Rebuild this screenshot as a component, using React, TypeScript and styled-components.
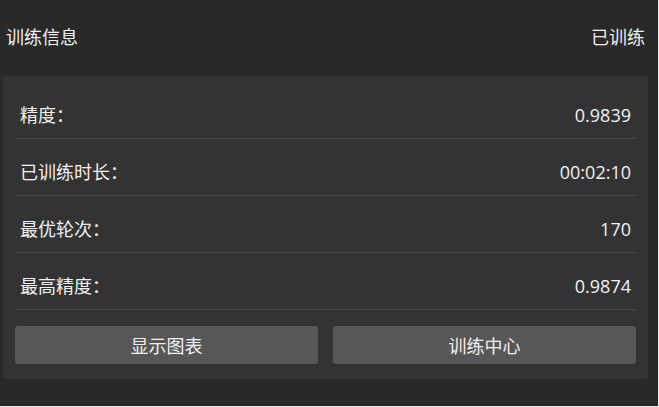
import React from 'react';
import styled, { createGlobalStyle } from 'styled-components';

const GlobalStyle = createGlobalStyle`
  html, body {
    margin: 0;
    padding: 0;
    background: #ececec;
  }
  * {
    box-sizing: border-box;
  }
`;

const Panel = styled.div`
  width: 658px;
  height: 406px;
  background: #292929;
  color: #f0f0f0;
  font-family: "Open Sans", "Noto Sans CJK SC", sans-serif;
  font-size: 18px;
  display: flex;
  flex-direction: column;
`;

const Header = styled.div`
  height: 76px;
  display: flex;
  align-items: center;
  justify-content: space-between;
  padding: 0 13px 2px 6px;
`;

const Title = styled.span`
  line-height: 24px;
`;

const Status = styled.span`
  line-height: 24px;
`;

const Card = styled.div`
  margin: 0 10px 0 3px;
  background: #333333;
  border-radius: 3px;
  padding: 6px 12px 15px;
`;

const Row = styled.div`
  display: flex;
  align-items: center;
  justify-content: space-between;
  padding: 21px 5px 11px 5px;
  border-bottom: 1px solid #4a4a4a;
  line-height: 24px;
`;

const Label = styled.span``;

const Value = styled.span``;

const Actions = styled.div`
  display: grid;
  grid-template-columns: 1fr 1fr;
  gap: 15px;
  margin-top: 16px;
`;

const ActionButton = styled.button`
  height: 38px;
  border: none;
  border-radius: 3px;
  background: #575757;
  color: #f0f0f0;
  font-family: inherit;
  font-size: 18px;
  cursor: pointer;
  padding: 0;
`;

const stats = [
  { label: '精度：', value: '0.9839' },
  { label: '已训练时长：', value: '00:02:10' },
  { label: '最优轮次：', value: '170' },
  { label: '最高精度：', value: '0.9874' },
];

const App: React.FC = () => {
  return (
    <>
      <GlobalStyle />
      <Panel>
        <Header>
          <Title>训练信息</Title>
          <Status>已训练</Status>
        </Header>
        <Card>
          {stats.map((s) => (
            <Row key={s.label}>
              <Label>{s.label}</Label>
              <Value>{s.value}</Value>
            </Row>
          ))}
          <Actions>
            <ActionButton>显示图表</ActionButton>
            <ActionButton>训练中心</ActionButton>
          </Actions>
        </Card>
      </Panel>
    </>
  );
};

export default App;
